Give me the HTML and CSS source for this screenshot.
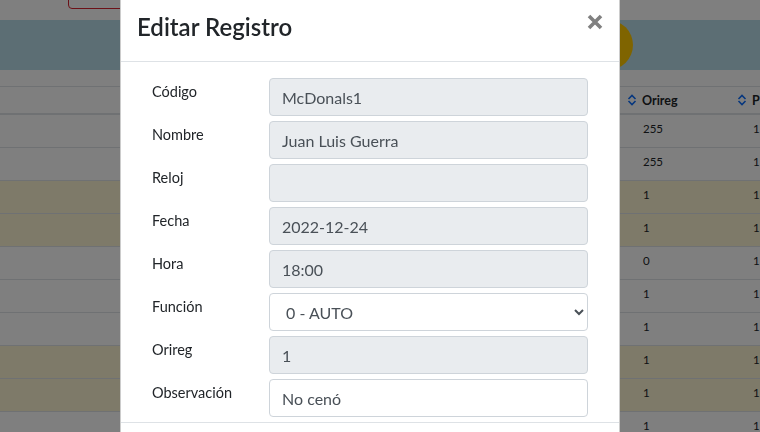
FILE: index.html
```html
<!DOCTYPE html>
<html lang="es">
<head>
<meta charset="utf-8">
<title>Editar Registro</title>
<link rel="stylesheet" href="styles.css">
</head>
<body>
<div class="page">
  <div class="topbar">
    <button class="btn-outline" type="button" aria-label="Salir"></button>
  </div>
  <div class="banner">
    <span class="fab">
      <svg width="26" height="26" viewBox="0 0 26 26"><path d="M13 2v22M2 13h22" stroke="#fff" stroke-width="3" fill="none"/></svg>
    </span>
  </div>
  <table class="grid">
    <colgroup><col class="c-main"><col class="c-ori"><col class="c-p"></colgroup>
    <thead>
      <tr>
        <th></th>
        <th><span class="sort"><svg width="10" height="12" viewBox="0 0 10 12"><path d="M1.5 5L5 1.5 8.5 5M1.5 7L5 10.5 8.5 7" stroke="#0d6efd" stroke-width="1.6" fill="none"/></svg>Orireg</span></th>
        <th><span class="sort"><svg width="10" height="12" viewBox="0 0 10 12"><path d="M1.5 5L5 1.5 8.5 5M1.5 7L5 10.5 8.5 7" stroke="#0d6efd" stroke-width="1.6" fill="none"/></svg>P</span></th>
      </tr>
    </thead>
    <tbody>
      <tr><td></td><td>255</td><td>1</td></tr>
      <tr><td></td><td>255</td><td>1</td></tr>
      <tr class="warn"><td></td><td>1</td><td>1</td></tr>
      <tr class="warn"><td></td><td>1</td><td>1</td></tr>
      <tr><td></td><td>0</td><td>1</td></tr>
      <tr><td></td><td>1</td><td>1</td></tr>
      <tr><td></td><td>1</td><td>1</td></tr>
      <tr class="warn"><td></td><td>1</td><td>1</td></tr>
      <tr class="warn"><td></td><td>1</td><td>1</td></tr>
      <tr><td></td><td>1</td><td>1</td></tr>
    </tbody>
  </table>
</div>

<div class="backdrop"></div>

<div class="modal">
  <div class="dialog">
    <div class="modal-header">
      <h5 class="modal-title">Editar Registro</h5>
      <button class="close" type="button" aria-label="Cerrar">
        <svg width="16" height="16" viewBox="0 0 16 16"><path d="M2 2L14 14M14 2L2 14" stroke="#808080" stroke-width="3.6" fill="none"/></svg>
      </button>
    </div>
    <div class="modal-body">
      <form class="form">
        <div class="row"><label>Código</label><input class="control ro" type="text" value="McDonals1" readonly></div>
        <div class="row"><label>Nombre</label><input class="control ro" type="text" value="Juan Luis Guerra" readonly></div>
        <div class="row"><label>Reloj</label><input class="control ro" type="text" value="" readonly></div>
        <div class="row"><label>Fecha</label><input class="control ro" type="text" value="2022-12-24" readonly></div>
        <div class="row"><label>Hora</label><input class="control ro" type="text" value="18:00" readonly></div>
        <div class="row"><label>Función</label>
          <select class="control sel">
            <option selected>0 - AUTO</option>
            <option>1 - ENTRADA</option>
            <option>2 - SALIDA</option>
          </select>
        </div>
        <div class="row"><label>Orireg</label><input class="control ro" type="text" value="1" readonly></div>
        <div class="row"><label>Observación</label><input class="control" type="text" value="No cenó"></div>
      </form>
    </div>
    <div class="modal-footer">
      <button class="btn btn-secondary" type="button">Cerrar</button>
      <button class="btn btn-primary" type="button">Guardar</button>
    </div>
  </div>
</div>
</body>
</html>
```
FILE: styles.css
```css
html, body {
  margin: 0;
  padding: 0;
  height: 100%;
  overflow: hidden;
  background: #fff;
  font-family: "Lato", "Noto Sans", sans-serif;
  color: #212529;
}

/* ---------- background page ---------- */
.page {
  width: 900px;
}
.topbar {
  height: 20px;
  display: flex;
  padding-left: 68px;
  overflow: hidden;
}
.btn-outline {
  margin-top: -25px;
  height: 34px;
  width: 90px;
  border: 1px solid #d9232e;
  border-radius: 4px;
  background: #fff;
}
.banner {
  height: 50px;
  background: #b8dce9;
  display: flex;
  align-items: center;
  padding-left: 583px;
}
.fab {
  width: 50px;
  height: 50px;
  border-radius: 50%;
  background: #ffc800;
  display: flex;
  align-items: center;
  justify-content: center;
}
.grid {
  margin-top: 16px;
  border-collapse: collapse;
  table-layout: fixed;
  width: 900px;
  font-size: 11.5px;
}
.c-main { width: 615px; }
.c-ori { width: 110px; }
.c-p { width: 175px; }
.grid th {
  height: 26px;
  padding: 0 0 0 12px;
  border-top: 1px solid #dee2e6;
  border-bottom: 2px solid #dee2e6;
  text-align: left;
  font-weight: 700;
  font-size: 12.5px;
  vertical-align: middle;
}
.sort {
  display: flex;
  align-items: center;
  gap: 5px;
}
.grid td {
  box-sizing: border-box;
  height: 33px;
  padding: 7px 0 0 28px;
  border-bottom: 1px solid #dee2e6;
  vertical-align: top;
  line-height: 14px;
}
.grid tr.warn td {
  background: #fdf4d2;
}

/* ---------- modal ---------- */
.backdrop {
  position: fixed;
  inset: 0;
  background: rgba(0, 0, 0, 0.5);
}
.modal {
  position: fixed;
  inset: 0;
  overflow: hidden;
}
.dialog {
  width: 500px;
  box-sizing: border-box;
  margin: -8px 0 0 120px;
  background: #fff;
  border: 1px solid rgba(0, 0, 0, 0.2);
  border-radius: 8px;
}
.modal-header {
  display: flex;
  justify-content: space-between;
  align-items: flex-start;
  padding: 16px;
  border-bottom: 1px solid #dee2e6;
}
.modal-title {
  margin: 0;
  font-size: 24px;
  font-weight: 600;
  line-height: 36px;
  color: #212529;
}
.close {
  margin-top: 5px;
  padding: 0;
  border: 0;
  background: none;
  width: 16px;
  height: 16px;
  display: block;
}
.close svg { display: block; }
.modal-body {
  padding: 16px 16px 0;
}
.form {
  margin: 0;
  padding: 0 15px;
}
.row {
  display: grid;
  grid-template-columns: 117px 1fr;
  margin-bottom: 5px;
}
.row label {
  font-size: 14.5px;
  line-height: 24px;
  padding-top: 2px;
  color: #212529;
}
.control {
  box-sizing: border-box;
  width: 100%;
  height: 38px;
  margin: 0;
  padding: 6px 12px;
  font: 16px "Lato", "Noto Sans", sans-serif;
  color: #495057;
  background: #fff;
  border: 1px solid #ced4da;
  border-radius: 4px;
}
.control.ro {
  background: #e9ecef;
}
.modal-footer {
  display: flex;
  justify-content: flex-end;
  gap: 8px;
  padding: 12px 16px;
  border-top: 1px solid #dee2e6;
}
.btn {
  font: 16px "Lato", sans-serif;
  padding: 6px 12px;
  border-radius: 4px;
  border: 1px solid transparent;
  color: #fff;
}
.btn-secondary { background: #6c757d; }
.btn-primary { background: #0d6efd; }
```
